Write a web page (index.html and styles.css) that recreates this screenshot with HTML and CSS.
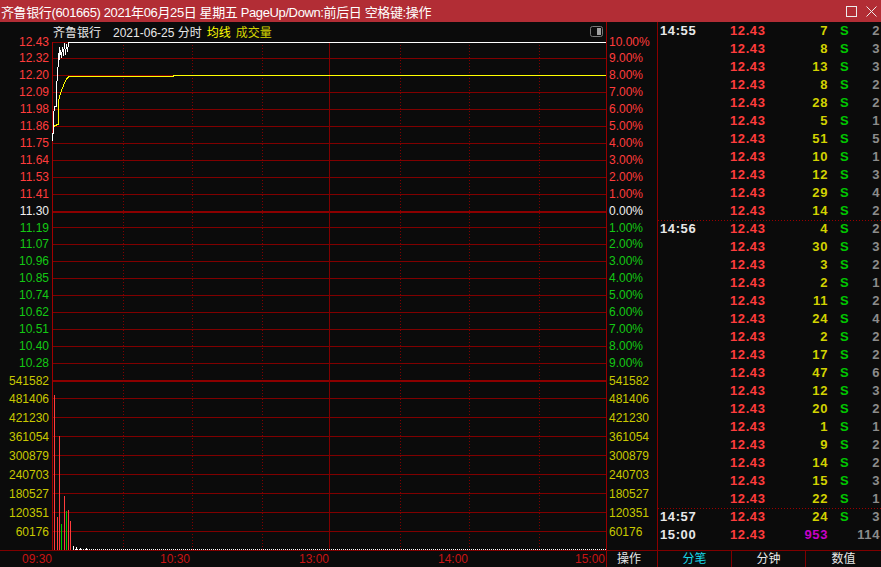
FILE: index.html
```html
<!DOCTYPE html>
<html lang="zh-CN">
<head>
<meta charset="utf-8">
<title>齐鲁银行 分时</title>
<link rel="stylesheet" href="styles.css">
</head>
<body>
<div class="titlebar">
  <span class="title">齐鲁银行(601665) 2021年06月25日 星期五 PageUp/Down:前后日 空格键:操作</span>
  <div class="winbtns">
    <svg width="11" height="11" viewBox="0 0 11 11"><rect x="0.5" y="0.5" width="10" height="10" fill="none" stroke="#ececec"/></svg>
    <svg width="11" height="11" viewBox="0 0 11 11"><path d="M0.5 0.5L10.5 10.5M10.5 0.5L0.5 10.5" stroke="#ececec" fill="none"/></svg>
  </div>
</div>

<div class="main">
  <div class="axis axis-left">
    <div class="lbl first r">12.43</div>
    <div class="lbl r">12.32</div>
    <div class="lbl r">12.20</div>
    <div class="lbl r">12.09</div>
    <div class="lbl r">11.98</div>
    <div class="lbl r">11.86</div>
    <div class="lbl r">11.75</div>
    <div class="lbl r">11.64</div>
    <div class="lbl r">11.53</div>
    <div class="lbl r">11.41</div>
    <div class="lbl w">11.30</div>
    <div class="lbl first g">11.19</div>
    <div class="lbl g">11.07</div>
    <div class="lbl g">10.96</div>
    <div class="lbl g">10.85</div>
    <div class="lbl g">10.74</div>
    <div class="lbl g">10.62</div>
    <div class="lbl g">10.51</div>
    <div class="lbl g">10.40</div>
    <div class="lbl g">10.28</div>
    <div class="lbl volhead y">541582</div>
    <div class="lbl vol y">481406</div>
    <div class="lbl vol y">421230</div>
    <div class="lbl vol y">361054</div>
    <div class="lbl vol y">300879</div>
    <div class="lbl vol y">240703</div>
    <div class="lbl vol y">180527</div>
    <div class="lbl vol y">120351</div>
    <div class="lbl vol y">60176</div>
  </div>

  <div class="plot">
    <div class="plot-head">
      <span class="stock">齐鲁银行</span>
      <span class="date">2021-06-25 分时</span>
      <span class="avg">均线</span>
      <span class="volname">成交量</span>
      <svg class="toggle" width="13" height="11" viewBox="0 0 13 11"><rect x="0.5" y="0.5" width="12" height="10" rx="2" fill="none" stroke="#787878"/><rect x="7" y="2" width="4" height="7" fill="#a0a0a0"/></svg>
    </div>
    <svg class="chart" width="554" height="509" viewBox="52 41 554 509">
      <g fill="none" stroke="#800000" shape-rendering="crispEdges">
        <path d="M52 42.5H606M52 58.5H606M52 75.5H606M52 92.5H606M52 109.5H606M52 126.5H606M52 143.5H606M52 160.5H606M52 177.5H606M52 194.5H606"/>
        <path d="M52 227.5H606M52 244.5H606M52 261.5H606M52 278.5H606M52 295.5H606M52 312.5H606M52 329.5H606M52 346.5H606M52 363.5H606"/>
        <path d="M52 398.5H606M52 417.5H606M52 436.5H606M52 455.5H606M52 474.5H606M52 493.5H606M52 512.5H606M52 531.5H606"/>
        <path d="M52 212H606M52 381H606" stroke-width="2" stroke="#8c0000"/>
        <path d="M123.5 42V550M192.5 42V550M262.5 42V550M400.5 42V550M469.5 42V550M539.5 42V550" stroke-dasharray="1 2"/>
        <path d="M329.5 42V550"/>
        <path d="M52.5 42V550" stroke="#a00000"/>
      </g>
      <g fill="none" shape-rendering="crispEdges">
        <path stroke="#ffff00" d="M53.5 131V126.5L57.5 124.5H58.5V101.5L60.5 93L62.5 88L64.5 83L66.5 79L68.5 77L70.5 76.5H173.5V75.5H606"/>
        <path stroke="#ffffff" d="M52.5 141V133.5H53.5V115L54.5 106.5H56.5V88L58.5 60L59.5 47V60L60.5 50L61.5 58L62.5 47L63.5 56L64.5 43L65.5 55L66.5 44L67.5 52L68.5 42.5H606"/>
      </g>
      <g fill="none" shape-rendering="crispEdges">
        <path stroke="#ff3c3c" d="M54.5 550V395M57.5 550V517M59.5 550V436M64.5 550V496M68.5 550V510M70.5 550V521"/>
        <path stroke="#00c800" d="M61.5 550V524M66.5 550V511"/>
        <path stroke="#ffffff" d="M73.5 550V546M76.5 550V547M80.5 550V548M86.5 550V548"/>
        <path stroke="#ffffff" d="M75 549.5H606" stroke-dasharray="1 1"/>
      </g>
    </svg>
  </div>

  <div class="axis axis-right">
    <div class="lbl first r">10.00%</div>
    <div class="lbl r">9.00%</div>
    <div class="lbl r">8.00%</div>
    <div class="lbl r">7.00%</div>
    <div class="lbl r">6.00%</div>
    <div class="lbl r">5.00%</div>
    <div class="lbl r">4.00%</div>
    <div class="lbl r">3.00%</div>
    <div class="lbl r">2.00%</div>
    <div class="lbl r">1.00%</div>
    <div class="lbl w">0.00%</div>
    <div class="lbl first g">1.00%</div>
    <div class="lbl g">2.00%</div>
    <div class="lbl g">3.00%</div>
    <div class="lbl g">4.00%</div>
    <div class="lbl g">5.00%</div>
    <div class="lbl g">6.00%</div>
    <div class="lbl g">7.00%</div>
    <div class="lbl g">8.00%</div>
    <div class="lbl g">9.00%</div>
    <div class="lbl volhead y">541582</div>
    <div class="lbl vol y">481406</div>
    <div class="lbl vol y">421230</div>
    <div class="lbl vol y">361054</div>
    <div class="lbl vol y">300879</div>
    <div class="lbl vol y">240703</div>
    <div class="lbl vol y">180527</div>
    <div class="lbl vol y">120351</div>
    <div class="lbl vol y">60176</div>
  </div>

  <div class="ticks">
    <div class="row"><span class="t">14:55</span><span class="p">12.43</span><span class="v">7</span><span class="s">S</span><span class="n">2</span></div>
    <div class="row"><span class="t"></span><span class="p">12.43</span><span class="v">8</span><span class="s">S</span><span class="n">3</span></div>
    <div class="row"><span class="t"></span><span class="p">12.43</span><span class="v">13</span><span class="s">S</span><span class="n">3</span></div>
    <div class="row"><span class="t"></span><span class="p">12.43</span><span class="v">8</span><span class="s">S</span><span class="n">2</span></div>
    <div class="row"><span class="t"></span><span class="p">12.43</span><span class="v">28</span><span class="s">S</span><span class="n">2</span></div>
    <div class="row"><span class="t"></span><span class="p">12.43</span><span class="v">5</span><span class="s">S</span><span class="n">1</span></div>
    <div class="row"><span class="t"></span><span class="p">12.43</span><span class="v">51</span><span class="s">S</span><span class="n">5</span></div>
    <div class="row"><span class="t"></span><span class="p">12.43</span><span class="v">10</span><span class="s">S</span><span class="n">1</span></div>
    <div class="row"><span class="t"></span><span class="p">12.43</span><span class="v">12</span><span class="s">S</span><span class="n">3</span></div>
    <div class="row"><span class="t"></span><span class="p">12.43</span><span class="v">29</span><span class="s">S</span><span class="n">4</span></div>
    <div class="row"><span class="t"></span><span class="p">12.43</span><span class="v">14</span><span class="s">S</span><span class="n">2</span></div>
    <div class="row sep"><span class="t">14:56</span><span class="p">12.43</span><span class="v">4</span><span class="s">S</span><span class="n">2</span></div>
    <div class="row"><span class="t"></span><span class="p">12.43</span><span class="v">30</span><span class="s">S</span><span class="n">3</span></div>
    <div class="row"><span class="t"></span><span class="p">12.43</span><span class="v">3</span><span class="s">S</span><span class="n">2</span></div>
    <div class="row"><span class="t"></span><span class="p">12.43</span><span class="v">2</span><span class="s">S</span><span class="n">1</span></div>
    <div class="row"><span class="t"></span><span class="p">12.43</span><span class="v">11</span><span class="s">S</span><span class="n">2</span></div>
    <div class="row"><span class="t"></span><span class="p">12.43</span><span class="v">24</span><span class="s">S</span><span class="n">4</span></div>
    <div class="row"><span class="t"></span><span class="p">12.43</span><span class="v">2</span><span class="s">S</span><span class="n">2</span></div>
    <div class="row"><span class="t"></span><span class="p">12.43</span><span class="v">17</span><span class="s">S</span><span class="n">2</span></div>
    <div class="row"><span class="t"></span><span class="p">12.43</span><span class="v">47</span><span class="s">S</span><span class="n">6</span></div>
    <div class="row"><span class="t"></span><span class="p">12.43</span><span class="v">12</span><span class="s">S</span><span class="n">3</span></div>
    <div class="row"><span class="t"></span><span class="p">12.43</span><span class="v">20</span><span class="s">S</span><span class="n">2</span></div>
    <div class="row"><span class="t"></span><span class="p">12.43</span><span class="v">1</span><span class="s">S</span><span class="n">1</span></div>
    <div class="row"><span class="t"></span><span class="p">12.43</span><span class="v">9</span><span class="s">S</span><span class="n">2</span></div>
    <div class="row"><span class="t"></span><span class="p">12.43</span><span class="v">14</span><span class="s">S</span><span class="n">2</span></div>
    <div class="row"><span class="t"></span><span class="p">12.43</span><span class="v">15</span><span class="s">S</span><span class="n">3</span></div>
    <div class="row"><span class="t"></span><span class="p">12.43</span><span class="v">22</span><span class="s">S</span><span class="n">1</span></div>
    <div class="row sep"><span class="t">14:57</span><span class="p">12.43</span><span class="v">24</span><span class="s">S</span><span class="n">3</span></div>
    <div class="row"><span class="t">15:00</span><span class="p">12.43</span><span class="v m">953</span><span class="s"></span><span class="n">114</span></div>
  </div>
</div>

<div class="bottom">
  <div class="timeaxis">
    <span>09:30</span>
    <span>10:30</span>
    <span>13:00</span>
    <span>14:00</span>
    <span class="last">15:00</span>
  </div>
  <div class="op">操作</div>
  <div class="tabs">
    <span class="tab active">分笔</span>
    <span class="tab">分钟</span>
    <span class="tab">数值</span>
  </div>
</div>
</body>
</html>
```

FILE: styles.css
```css
* {
  box-sizing: border-box;
  margin: 0;
  padding: 0;
}

body {
  width: 881px;
  height: 567px;
  overflow: hidden;
  background: #0b0b0b;
  font-family: "Liberation Sans", "Noto Sans CJK SC", sans-serif;
}

.titlebar {
  height: 22px;
  background: #b22d35;
  color: #ffffff;
  display: flex;
  align-items: center;
  justify-content: space-between;
  padding-left: 1px;
  padding-right: 4px;
}

.title {
  font-size: 13px;
  letter-spacing: -0.38px;
  white-space: nowrap;
}

.winbtns {
  display: flex;
  gap: 9px;
}

.winbtns svg {
  display: block;
}

.main {
  display: flex;
  height: 528px;
}

.axis {
  display: flex;
  flex-direction: column;
  padding-top: 12px;
  font-size: 12px;
  width: 52px;
}

.axis-left {
  text-align: right;
  padding-right: 3px;
}

.axis-right {
  width: 50px;
  padding-left: 2px;
}

.lbl {
  height: 17px;
  line-height: 17px;
  white-space: nowrap;
}

.lbl.first {
  height: 16px;
  line-height: 16px;
}

.lbl.volhead {
  height: 18px;
  line-height: 18px;
}

.lbl.vol {
  height: 19px;
  line-height: 19px;
}

.r { color: #ff3c3c; }
.w { color: #f0f0f0; }
.g { color: #14c814; }
.y { color: #c8c800; }

.plot {
  width: 555px;
  border-right: 1px solid #990000;
  display: flex;
  flex-direction: column;
}

.plot-head {
  height: 19px;
  display: flex;
  align-items: center;
  padding-left: 1px;
  padding-right: 3px;
  font-size: 12px;
  color: #e8e8e8;
  white-space: nowrap;
}

.plot-head .date {
  margin-left: 12px;
}

.plot-head .avg {
  margin-left: 5px;
  color: #ffff00;
}

.plot-head .volname {
  margin-left: 5px;
  color: #d4d400;
}

.plot-head .toggle {
  margin-left: auto;
  display: block;
}

.chart {
  display: block;
}

.ticks {
  width: 224px;
  border-left: 1px solid #8a0000;
  font-size: 13px;
  font-weight: bold;
  letter-spacing: 0.6px;
}

.row {
  display: grid;
  grid-template-columns: 70px 40px 58px 24px 28px;
  height: 18px;
  line-height: 18px;
  padding-left: 2px;
  white-space: nowrap;
}

.row.sep {
  background: repeating-linear-gradient(to right, #990000 0 1px, transparent 1px 3px) top left / 100% 1px no-repeat;
}

.t { color: #e8e8e8; }
.p { color: #ff3c3c; }
.v { color: #d2d200; text-align: right; }
.v.m { color: #c800c8; }
.s { color: #00c800; padding-left: 12px; }
.n { color: #8c8c8c; text-align: right; }

.bottom {
  height: 17px;
  border-top: 1px solid #800000;
  display: flex;
  font-size: 12px;
  line-height: 16px;
}

.timeaxis {
  width: 607px;
  border-right: 1px solid #990000;
  display: grid;
  grid-template-columns: 52px 139px 139px 139px 137px;
  color: #c81414;
  text-align: right;
}

.timeaxis span {
  padding-right: 1px;
}

.timeaxis span:first-child {
  padding-right: 0;
}

.timeaxis .last {
  padding-right: 1px;
}

.op {
  width: 50px;
  padding-left: 10px;
  color: #e8e8e8;
}

.tabs {
  width: 224px;
  border-left: 1px solid #8a0000;
  display: grid;
  grid-template-columns: 74px 74px 1fr;
}

.tab {
  text-align: center;
  color: #e8e8e8;
  border-right: 1px solid #800000;
}

.tab:last-child {
  border-right: none;
}

.tab.active {
  color: #18d8e8;
}
```
